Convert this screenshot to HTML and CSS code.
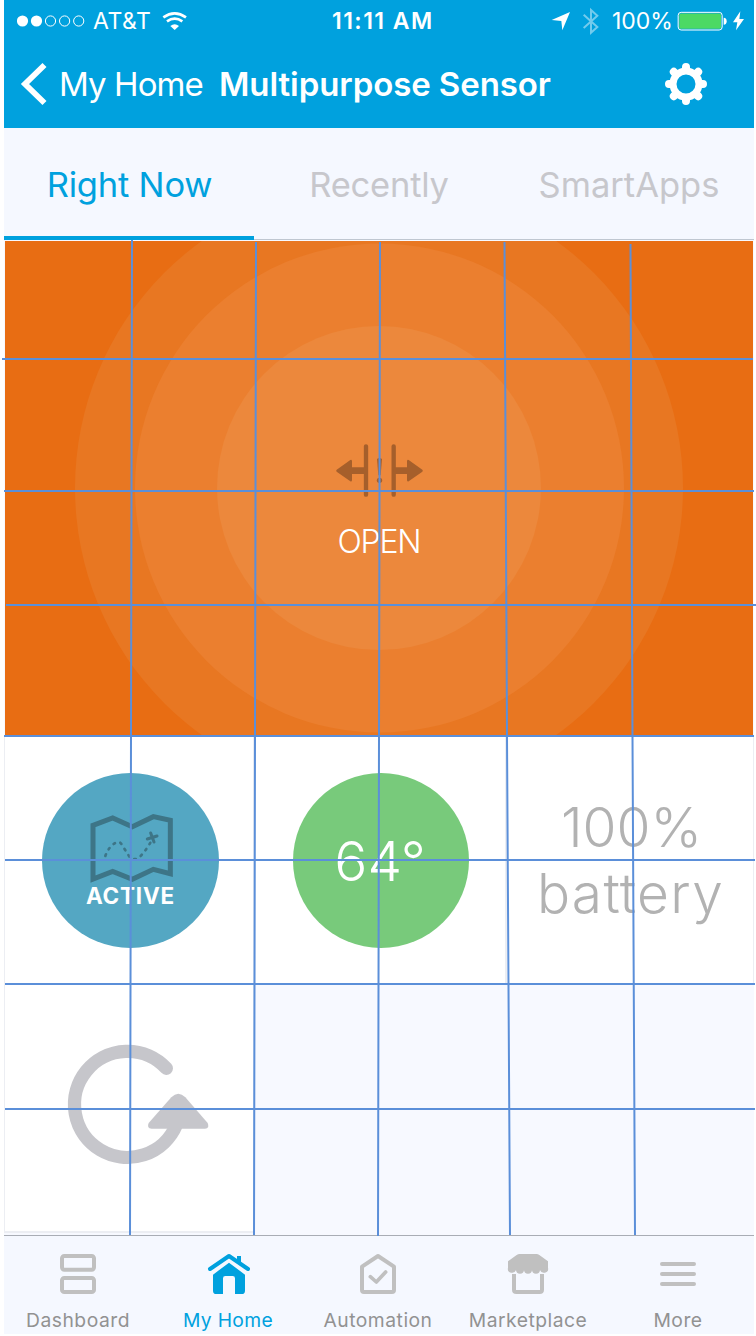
FILE: index.html
```html
<!DOCTYPE html>
<html lang="en">
<head>
<meta charset="utf-8">
<title>Multipurpose Sensor</title>
<link rel="stylesheet" href="styles.css">
</head>
<body>
<div class="phone">
  <header class="header">
    <div class="status">
      <svg class="signal" width="70" height="14" viewBox="0 0 70 14"><g fill="#fff"><circle cx="5.5" cy="7" r="5.6"/><circle cx="19.5" cy="7" r="5.6"/></g><g fill="none" stroke="#fff"><circle cx="33.5" cy="7" r="5.1"/><circle cx="47.6" cy="7" r="5.1"/><circle cx="61.7" cy="7" r="5.1"/></g></svg>
      <span class="carrier">AT&amp;T</span>
      <svg width="26" height="20" viewBox="486 30 78 60"><g fill="none" stroke="#fff" stroke-width="8"><path d="M490 49Q524 25 558 49"/><path d="M501 61Q524 45 547 61"/></g><path d="M511 75Q524 64 537 75L524 87Z" fill="#fff"/></svg>
      <span class="time">11:11 AM</span>
      <svg width="20" height="20" viewBox="526 32 60 60"><path d="M583 35L560 90L557 62L528 59Z" fill="#fff"/></svg>
      <svg width="18" height="28" viewBox="615 18 54 84"><path d="M620 41L661 78L642 95V27L661 44L620 81" fill="none" stroke="#fff" stroke-width="6" opacity=".45"/></svg>
      <span class="percent">100%</span>
      <svg width="51" height="20" viewBox="904 31 153 60"><rect x="907.500" y="35" width="132" height="53" rx="9" fill="none" stroke="#fff" stroke-width="3"/><rect x="911" y="38.500" width="125" height="46" rx="5" fill="#4cd964"/><path d="M1044 51Q1053 52 1053 61.500Q1053 71 1044 72Z" fill="#fff"/></svg>
      <svg width="13" height="20" viewBox="1068 31 39 60"><path d="M1093 32L1071 65H1084L1080 89L1104 55H1090Z" fill="#fff"/></svg>
    </div>
    <div class="nav">
      <svg width="28" height="44" viewBox="20 62 28 44"><path d="M44.500 65L25 84L44.500 103" fill="none" stroke="#fff" stroke-width="5.800"/></svg>
      <span class="back">My Home</span>
      <span class="title">Multipurpose Sensor</span>
      <svg width="44" height="44" viewBox="-22 -22 44 44"><circle r="13" fill="none" stroke="#fff" stroke-width="7"/><path d="M0-14V-17M0 14V17M-14 0H-17M14 0H17M-10-10L-12.200-12.200M10-10L12.200-12.200M-10 10L-12.200 12.200M10 10L12.200 12.200" stroke="#fff" stroke-width="8" stroke-linecap="round"/></svg>
    </div>
  </header>

  <nav class="tabs">
    <span class="tab tab-active"><span class="t-now">Right Now</span></span>
    <span class="tab"><span class="t-recent">Recently</span></span>
    <span class="tab"><span class="t-apps">SmartApps</span></span>
  </nav>

  <main class="tiles">
    <section class="hero">
      <svg class="rings" width="748" height="495" viewBox="5 241 748 495"><circle cx="379" cy="488" r="304" fill="#e87722"/><circle cx="379.500" cy="488" r="244.500" fill="#eb7f2f"/><circle cx="379" cy="488" r="162" fill="#ec883c"/></svg>
      <div class="contact">
        <svg width="90" height="56" viewBox="102 66 270 168"><g fill="none" stroke="#a65f2b" stroke-linecap="round"><path d="M198 79V224M281 79V224" stroke-width="13"/></g><path d="M198 142H156V123Q155 118 151 120L110 149Q107 152 110 155L151 184Q155 186 156 181V162H198ZM281 142H321V123Q322 118 326 120L367 149Q370 152 367 155L326 184Q322 186 321 181V162H281Z" fill="#a65f2b"/><path d="M231 117Q238 111 246 117L242 166H235Z" fill="#a65f2b"/><circle cx="238.500" cy="181" r="8" fill="#a65f2b"/></svg>
        <span class="open">OPEN</span>
      </div>
    </section>
    <section class="tile tile-first">
      <div class="disc disc-blue">
        <svg width="86" height="72" viewBox="202 246 258 216"><g fill="none" stroke="#3d7587"><path d="M217 286L276 264L335 290L398 260L449 271V431L398 418L335 448L276 424L217 447Z" stroke-width="15"/><path d="M254 378Q264 350 285 338Q298 332 304 345L325 378Q340 397 360 378Q378 358 389 338" stroke-width="8" stroke-dasharray="5 17" stroke-linecap="round"/><path d="M390 309L400 336M380 327L409 318" stroke-width="9" stroke-linecap="round"/></g></svg>
        <span class="active">ACTIVE</span>
      </div>
    </section>
    <section class="tile">
      <div class="disc disc-green"><span class="temp">64°</span></div>
    </section>
    <section class="tile tile-last">
      <div class="battery"><span class="b-num">100%</span><span class="b-word">battery</span></div>
    </section>
    <section class="tile tile-first tile-refresh">
      <svg width="144" height="122" viewBox="200 190 432 366"><path d="M501 263A159 159 0 1 0 531 433" fill="none" stroke="#c6c6cb" stroke-width="40" stroke-linecap="round"/><path d="M516 350Q537 328 558 350L625 427Q632 443 617 444H457Q441 443 448 427Z" fill="#c6c6cb"/></svg>
    </section>
  </main>

  <footer class="bar">
    <div class="item"><svg width="44" height="42" viewBox="168 84 132 126"><g fill="none" stroke="#c0c0c0" stroke-width="12"><rect x="186" y="93" width="96" height="41" rx="7"/><rect x="186" y="159" width="96" height="42" rx="7"/></g></svg><span class="l-dash">Dashboard</span></div>
    <div class="item item-active"><svg width="44" height="42" viewBox="618 84 132 126"><g fill="#00a1de"><path d="M630 132L687 93L744 132" fill="none" stroke="#00a1de" stroke-width="12" stroke-linecap="round" stroke-linejoin="round"/><path d="M711 93H723V120L711 112Z"/><path d="M639 149L687 113L735 149V197Q735 207 725 207H705V160Q705 153 698 153H676Q669 153 669 160V207H649Q639 207 639 197Z"/></g></svg><span class="l-home">My Home</span></div>
    <div class="item"><svg width="44" height="42" viewBox="1068 84 132 126"><g fill="none" stroke="#c0c0c0" stroke-width="12" stroke-linejoin="round"><path d="M1086 195V125L1134 93L1182 125V195Q1182 201 1176 201H1092Q1086 201 1086 195Z"/><path d="M1111 155L1129 171L1157 141" stroke-width="11" stroke-linecap="round"/></g></svg><span class="l-auto">Automation</span></div>
    <div class="item"><svg width="44" height="42" viewBox="390 84 132 126"><path d="M396 109L422 90Q426 87 431 87H481Q486 87 490 90L516 109V128A12 12 0 0 1 492 134A12 12 0 0 1 468 134A12 12 0 0 1 444 134A12 12 0 0 1 420 134A12 12 0 0 1 396 128Z" fill="#c0c0c0"/><path d="M414 147V194Q414 201 421 201H491Q498 201 498 194V147" fill="none" stroke="#c0c0c0" stroke-width="12"/></svg><span class="l-market">Marketplace</span></div>
    <div class="item"><svg width="44" height="42" viewBox="840 84 132 126"><path d="M858 117H954M858 147H954M858 177H954" stroke="#c0c0c0" stroke-width="12" stroke-linecap="round"/></svg><span class="l-more">More</span></div>
  </footer>
</div>
<svg class="guides" width="756" height="1336" viewBox="0 0 756 1336"><path d="M2 359H753M4 491H754M6 605H756M4 736H754M5 860H755M5 984H755M5 1109H755M132 240L131 737L130 1235M256 242L255 737L254 1235M380 242L379 737L378 1236M504.500 242L507 737L510 1235M630.500 244L632.500 737L635 1235"/></svg>
</body>
</html>
```
FILE: styles.css
```css
* { box-sizing: border-box; }
body { margin: 0; background: #fff; font-family: Inter, "Liberation Sans", sans-serif; position: relative; width: 756px; height: 1336px; overflow: hidden; }
svg { display: block; flex: none; }
span { white-space: nowrap; }
.phone { width: 750px; height: 1334px; margin-left: 4px; display: flex; flex-direction: column; background: #f7f9ff; }

.header { height: 128px; background: #00a1de; color: #fff; }
.status { height: 41px; padding-left: 13px; display: grid; grid-template-columns: 76px 69px 170px 219px 31px 30px 65px 55px 1fr; align-items: center; font-size: 23px; }
.carrier { letter-spacing: 0.5px; }
.time { font-weight: 600; letter-spacing: 1.45px; }
.nav { height: 86px; padding-left: 16px; display: grid; grid-template-columns: 39px 160px 445px 1fr; align-items: center; font-size: 33px; }
.back { letter-spacing: -0.9px; }
.title { font-weight: 600; letter-spacing: -0.08px; }

.tabs { height: 112px; display: grid; grid-template-columns: repeat(3, 1fr); background: #f5f8ff; border-bottom: 1px solid #bfc7d1; font-size: 34.5px; color: #c7c7cc; }
.tab { height: 112px; display: flex; align-items: center; justify-content: center; }
.tab-active { color: #00a1de; border-bottom: 4px solid #00a1de; padding-top: 4px; }
.t-now { letter-spacing: -0.2px; padding-left: 1px; }
.t-recent { letter-spacing: -0.2px; }

.tiles { height: 995px; padding-top: 1px; display: grid; grid-template-columns: 251px 252px 247px; grid-template-rows: 495px 248px 247px; }
.hero { grid-column: 1 / 4; margin: 0 1px; background: #e86d13; display: grid; }
.rings, .contact { grid-area: 1 / 1; }
.contact { display: flex; flex-direction: column; align-items: center; gap: 24px; padding-top: 201px; }
.open { font-size: 32px; line-height: 40px; font-weight: 300; letter-spacing: -1.2px; color: #fff; }
.tile { background: #fff; border-right: 2px solid #eceef3; display: flex; flex-direction: column; align-items: center; padding-top: 37px; }
.tile-first { border-left: 1px solid #eceef3; }
.tile-last { border-right-width: 1px; }
.disc { width: 177px; height: 175px; border-radius: 50%; display: flex; flex-direction: column; align-items: center; color: #fff; }
.disc-blue { background: #54a7c3; padding-top: 39px; margin-left: 3px; }
.disc-green { background: #78ca7b; justify-content: center; width: 176px; margin-left: 2px; }
.active { font-size: 22.5px; line-height: 24px; font-weight: 700; letter-spacing: 0.8px; }
.temp { font-size: 55px; font-weight: 300; padding-right: 2px; }
.battery { display: flex; flex-direction: column; align-items: center; font-size: 55px; line-height: 66px; font-weight: 300; color: #b2b2b2; padding-top: 21px; }
.b-num { padding-left: 3px; }
.b-word { letter-spacing: 1.3px; padding-left: 1px; }
.tile-refresh { border-bottom: 2px solid #eceef3; padding-top: 60px; padding-left: 18px; height: 249px; }

.bar { height: 99px; border-top: 1px solid #a9adb5; background: #f5f8ff; display: grid; grid-template-columns: repeat(5, 1fr); color: #929292; }
.item { display: flex; flex-direction: column; align-items: center; gap: 13px; padding: 17px 2px 0 0; font-size: 19.300px; line-height: 24px; letter-spacing: 0.5px; }
.item-active { color: #00a1de; letter-spacing: 0.3px; }
.guides { position: absolute; left: 0; top: 0; fill: none; stroke: #5b8fd9; stroke-width: 2; }
```
